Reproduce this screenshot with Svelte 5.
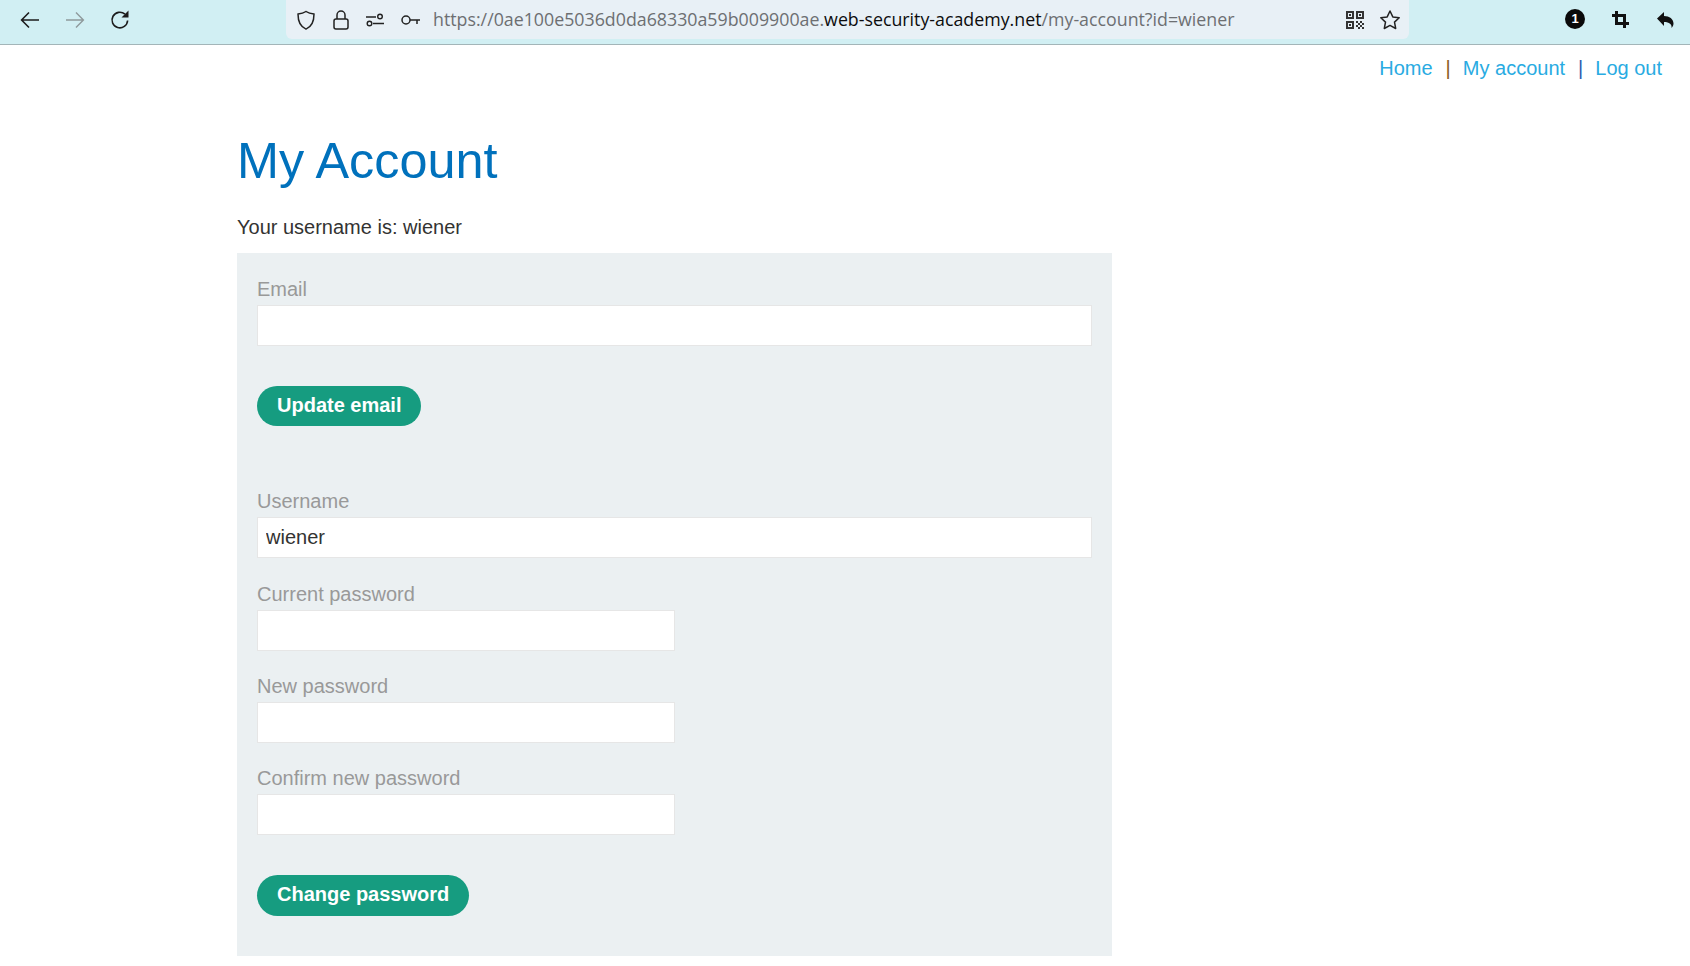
<script>
	const passwordFields = ["Current password", "New password", "Confirm new password"];
</script>

<header class="toolbar">
	<button class="nav-btn first" aria-label="Back">
		<svg width="22" height="22" viewBox="0 0 22 22" fill="none" stroke="#1c1c1c" stroke-width="1.6"><path d="M20 11H3M10 3.5 2.6 11l7.4 7.5" /></svg>
	</button>
	<button class="nav-btn" aria-label="Forward">
		<svg width="22" height="22" viewBox="0 0 22 22" fill="none" stroke="#8f9a9c" stroke-width="1.4"><path d="M2 11h17M12 3.5l7.4 7.5-7.4 7.5" /></svg>
	</button>
	<button class="nav-btn" aria-label="Reload">
		<svg width="22" height="22" viewBox="0 0 22 22" fill="none" stroke="#1c1c1c" stroke-width="1.6"><path d="M18.600 11.500a7.800 7.800 0 1 1-2.600-6.300" /><path d="M19.500 1.500v7h-7z" fill="#1c1c1c" stroke="none" /></svg>
	</button>

	<div class="urlbar">
		<svg class="u-icon" width="20" height="22" viewBox="0 0 20 22" fill="none" stroke="#222" stroke-width="1.5"><path d="M10 2.500c2.500 1.700 5 2.300 8 2.600 0 7-1.500 12.500-8 15-6.500-2.500-8-8-8-15 3-.3 5.500-.9 8-2.600z" /></svg>
		<svg class="u-icon" width="16" height="22" viewBox="0 0 16 22" fill="none" stroke="#222" stroke-width="1.5"><rect x="1" y="10" width="14" height="10" rx="2" /><path d="M4 10V6a4 4 0 0 1 8 0v4" /></svg>
		<svg class="u-icon" width="18" height="14" viewBox="0 0 18 14" fill="none" stroke="#222" stroke-width="1.4"><path d="M0 4h10M7 10.500h11" /><circle cx="14" cy="3.500" r="2.300" /><circle cx="3.500" cy="10.500" r="2.300" /></svg>
		<svg class="u-icon" width="20" height="12" viewBox="0 0 20 12" fill="none" stroke="#222" stroke-width="1.5"><circle cx="5" cy="6" r="4" /><path d="M9 6h10M16 6v4" /></svg>
		<span class="url">https://0ae100e5036d0da68330a59b009900ae.<b>web-security-academy.net</b>/my-account?id=wiener</span>
		<svg class="qr" width="18" height="18" viewBox="0 0 18 18" fill="#333">
			<path d="M0 0h8v8H0zM2 2v4h4V2zM10 0h8v8h-8zM12 2v4h4V2zM0 10h8v8H0zM2 12v4h4v-4z" fill-rule="evenodd" />
			<path d="M3 3h2v2H3zM13 3h2v2h-2zM3 13h2v2H3zM10 10h2v2h-2zM14 10h2v2h-2zM12 12h2v2h-2zM16 12h2v2h-2zM10 14h2v2h-2zM14 14h2v2h-2zM12 16h2v2h-2zM16 16h2v2h-2z" />
		</svg>
		<svg class="star" width="22" height="22" viewBox="0 0 22 22" fill="none" stroke="#222" stroke-width="1.5" stroke-linejoin="round"><path d="M11 2l2.800 5.900 6.400.8-4.700 4.400 1.200 6.400L11 16.400l-5.700 3.100 1.200-6.400L1.800 8.700l6.400-.8z" /></svg>
	</div>

	<div class="ext-icons">
		<span class="badge">1</span>
		<svg class="crop" width="17" height="17" viewBox="0 0 17 17" fill="none" stroke="#111" stroke-width="3"><path d="M4.500 0v12.500H17M0 4.500h12.500V17" /></svg>
		<svg class="undo" width="17" height="17" viewBox="0 0 17 17" fill="#111"><path d="M7 1v4c5.500 0 9.500 3 9.500 7.500 0 1.800-.8 3.300-2 4.500.5-3.500-2-6-7.500-6v4L0 7.500z" /></svg>
	</div>
</header>

<section class="page">
	<nav class="top-links">
		<a href="#home">Home</a><span class="sep one">|</span>
		<a href="#account">My account</a><span class="sep two">|</span>
		<a href="#logout">Log out</a>
	</nav>

	<main class="content">
		<h1>My Account</h1>
		<p class="user-line">Your username is: wiener</p>

		<div class="panel">
			<form class="email-form">
				<label for="email">Email</label>
				<input id="email" type="email" />
				<button class="primary" type="button">Update email</button>
			</form>

			<form class="password-form">
				<label for="username">Username</label>
				<input id="username" type="text" value="wiener" />
				{#each passwordFields as name}
					<label for={name}>{name}</label>
					<input id={name} class="half" type="password" />
				{/each}
				<button class="primary" type="button">Change password</button>
			</form>
		</div>
	</main>
</section>

<style>
	:global(body) {
		background: #fff;
		font-family: "Liberation Sans", Arial, sans-serif;
		overflow: hidden;
	}
	.toolbar {
		height: 44px;
		border-bottom: 1px solid #a3b5b8;
		background: #d1eff3;
		display: flex;
		align-items: flex-start;
	}
	.nav-btn {
		width: 22px;
		height: 22px;
		margin: 9px 0 0 23px;
		padding: 0;
		border: 0;
		background: none;
	}
	.nav-btn.first {
		margin-left: 19px;
	}
	.urlbar {
		width: 1123px;
		height: 39px;
		margin-left: 155px;
		box-sizing: border-box;
		background: #e8f0f6;
		border-radius: 0 0 6px 6px;
		display: flex;
		align-items: center;
		padding: 0 8px 0 10px;
	}
	.u-icon {
		margin-right: 17px;
		flex: none;
	}
	.url {
		font-family: "Open Sans", sans-serif;
		font-size: 17.8px;
		color: #6d6f72;
		white-space: nowrap;
		flex: 1;
		margin: 0 0 2px -5px;
	}
	.url b {
		font-weight: 400;
		color: #0c0c0d;
	}
	.qr {
		margin-right: 15px;
	}
	.ext-icons {
		margin-left: 156px;
		display: flex;
		align-items: center;
		height: 38px;
	}
	.badge {
		width: 20px;
		height: 20px;
		border-radius: 50%;
		background: #0a0a0a;
		color: #fff;
		font-size: 13px;
		font-weight: 700;
		line-height: 20px;
		text-align: center;
	}
	.crop {
		margin-left: 27px;
	}
	.undo {
		margin-left: 28px;
	}
	.top-links {
		display: flex;
		justify-content: flex-end;
		align-items: center;
		padding: 11px 28px 0 0;
		height: 24px;
		font-size: 20px;
		color: #333;
	}
	.top-links a {
		color: #29abe2;
		text-decoration: none;
	}
	.sep {
		margin: 0 12px 0 13px;
		font-size: 20px;
	}
	.sep.one {
		color: #8a5a1a;
	}
	.sep.two {
		color: #2a5db0;
	}
	.content {
		width: 875px;
		margin-left: 237px;
	}
	h1 {
		margin: 52px 0 0;
		font-size: 50.4px;
		line-height: 58px;
		font-weight: 400;
		color: #0071bc;
	}
	.user-line {
		margin: 25px 0 0;
		font-size: 20px;
		line-height: 24px;
		color: #333332;
	}
	.panel {
		margin-top: 14px;
		background: #ebf0f2;
		padding: 25px 20px 0;
		height: 703px;
		box-sizing: border-box;
	}
	form {
		display: flex;
		flex-direction: column;
		align-items: flex-start;
	}
	label {
		font-size: 20px;
		line-height: 23px;
		color: #999;
		margin-bottom: 4px;
	}
	input {
		width: 100%;
		height: 41px;
		box-sizing: border-box;
		border: 1px solid #e6e6e6;
		background: #fff;
		padding: 0 8px;
		margin: 0 0 24.3px;
		font: 20px "Liberation Sans", Arial, sans-serif;
		color: #333332;
		outline: none;
	}
	input.half {
		width: 418px;
	}
	.primary {
		height: 40.5px;
		padding: 0 20px 2px;
		margin-top: 15.7px;
		border: 0;
		border-radius: 25px;
		background: #169c80;
		color: #fff;
		font: 700 20px "Liberation Sans", Arial, sans-serif;
	}
	.password-form {
		margin-top: 63.8px;
	}
</style>
